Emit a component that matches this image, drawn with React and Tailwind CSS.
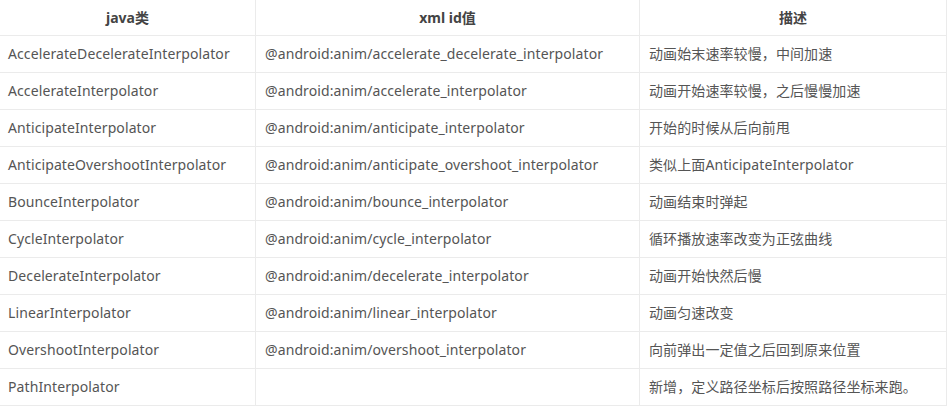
const rows = [
  ["AccelerateDecelerateInterpolator", "@android:anim/accelerate_decelerate_interpolator", "动画始末速率较慢，中间加速"],
  ["AccelerateInterpolator", "@android:anim/accelerate_interpolator", "动画开始速率较慢，之后慢慢加速"],
  ["AnticipateInterpolator", "@android:anim/anticipate_interpolator", "开始的时候从后向前甩"],
  ["AnticipateOvershootInterpolator", "@android:anim/anticipate_overshoot_interpolator", "类似上面AnticipateInterpolator"],
  ["BounceInterpolator", "@android:anim/bounce_interpolator", "动画结束时弹起"],
  ["CycleInterpolator", "@android:anim/cycle_interpolator", "循环播放速率改变为正弦曲线"],
  ["DecelerateInterpolator", "@android:anim/decelerate_interpolator", "动画开始快然后慢"],
  ["LinearInterpolator", "@android:anim/linear_interpolator", "动画匀速改变"],
  ["OvershootInterpolator", "@android:anim/overshoot_interpolator", "向前弹出一定值之后回到原来位置"],
  ["PathInterpolator", "", "新增，定义路径坐标后按照路径坐标来跑。"],
];

export default function App() {
  return (
    <div
      className="w-[949px] h-[416px] bg-white overflow-hidden text-[14px] text-[#555]"
      style={{ fontFamily: '"Noto Sans", "Noto Sans CJK SC", sans-serif' }}
    >
      <div className="w-[947px] border-r border-[#ebebeb]">
        <div className="flex h-[36px] border-b border-[#ebebeb] font-bold text-[#444]">
          <div className="w-[256px] flex items-center justify-center border-r border-[#ebebeb]">java类</div>
          <div className="w-[384px] flex items-center justify-center border-r border-[#ebebeb]">xml id值</div>
          <div className="flex-1 flex items-center justify-center">描述</div>
        </div>
        {rows.map((r, i) => (
          <div key={i} className="flex h-[37px] border-b border-[#ebebeb] tracking-[0.1px]">
            <div className="w-[256px] flex items-center pl-[8px] pb-[2px] border-r border-[#ebebeb] whitespace-nowrap">{r[0]}</div>
            <div className="w-[384px] flex items-center pl-[9px] pb-[2px] border-r border-[#ebebeb] whitespace-nowrap">{r[1]}</div>
            <div className="flex-1 flex items-center pl-[9px] pb-[2px] whitespace-nowrap">{r[2]}</div>
          </div>
        ))}
      </div>
    </div>
  );
}
